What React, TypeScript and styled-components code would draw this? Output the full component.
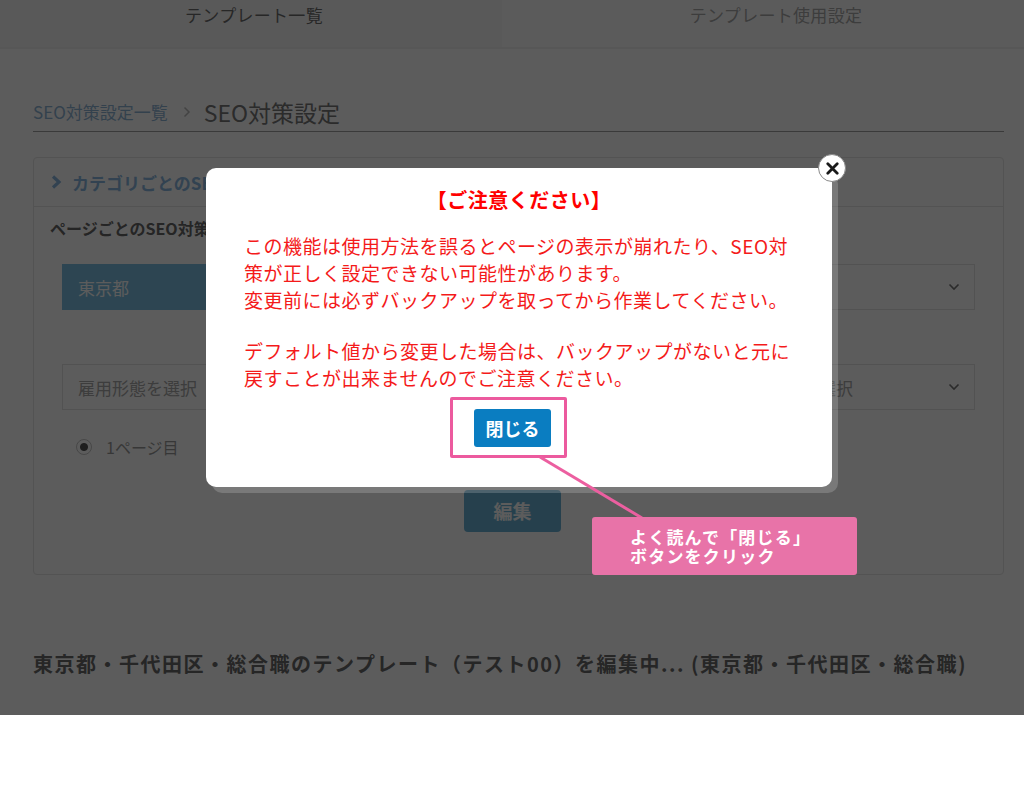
import React from "react"
import styled, { createGlobalStyle } from "styled-components"

const GlobalStyle = createGlobalStyle`
  html, body {
    margin: 0;
    padding: 0;
    background: #fff;
  }
  body {
    font-family: "Noto Sans CJK JP", "Noto Sans", sans-serif;
  }
  * {
    box-sizing: border-box;
  }
`

const App: React.FC = () => {
    return (
        <>
            <GlobalStyle />
            <Page>
                <TabBar>
                    <Tab $bg="#f7f7f7" $color="#6e6e6e" $shift={6}>テンプレート一覧</Tab>
                    <Tab $bg="#fdfdfd" $color="#a8a8a8" $shift={26}>テンプレート使用設定</Tab>
                </TabBar>

                <Content>
                    <Breadcrumb>
                        <CrumbLink>SEO対策設定一覧</CrumbLink>
                        <CrumbSep width="8" height="12" viewBox="0 0 8 12">
                            <polyline points="1.5,1.5 6,6 1.5,10.5" fill="none" stroke="#bbb" strokeWidth="1.5" />
                        </CrumbSep>
                        <CrumbCurrent>SEO対策設定</CrumbCurrent>
                    </Breadcrumb>

                    <Panel>
                        <PanelHeader>
                            <svg width="11" height="14" viewBox="0 0 11 14">
                                <polyline points="2,1.5 8,7 2,12.5" fill="none" stroke="#8cb8e0" strokeWidth="3.2" strokeLinejoin="miter" />
                            </svg>
                            カテゴリごとのSEO対策設定
                        </PanelHeader>
                        <PanelBody>
                            <SectionTitle>ページごとのSEO対策設定</SectionTitle>
                            <SelectRow $top={24}>
                                <Cell $active>東京都</Cell>
                                <Cell>千代田区<Chevron /></Cell>
                                <Cell>総合職<Chevron /></Cell>
                            </SelectRow>
                            <SelectRow $top={54}>
                                <Cell>雇用形態を選択<Chevron /></Cell>
                                <Cell>職種を選択<Chevron /></Cell>
                                <Cell>こだわり条件を選択<Chevron /></Cell>
                            </SelectRow>
                            <RadioRow>
                                <RadioCircle />
                                1ページ目
                            </RadioRow>
                            <ButtonRow>
                                <EditButton>編集</EditButton>
                            </ButtonRow>
                        </PanelBody>
                    </Panel>

                    <EditingTitle>東京都・千代田区・総合職のテンプレート（テスト00）を編集中... (東京都・千代田区・総合職)</EditingTitle>
                </Content>

                <Overlay>
                    <Modal>
                        <CloseButton>
                            <svg width="13" height="13" viewBox="0 0 13 13">
                                <path d="M1.8 1.8 L11.2 11.2 M11.2 1.8 L1.8 11.2" stroke="#1a1a1a" strokeWidth="2.8" strokeLinecap="round" />
                            </svg>
                        </CloseButton>
                        <ModalTitle>【ご注意ください】</ModalTitle>
                        <Notice>
                            この機能は使用方法を誤るとページの表示が崩れたり、SEO対<br />
                            策が正しく設定できない可能性があります。<br />
                            変更前には必ずバックアップを取ってから作業してください。
                        </Notice>
                        <Notice>
                            デフォルト値から変更した場合は、バックアップがないと元に<br />
                            戻すことが出来ませんのでご注意ください。
                        </Notice>
                        <ModalActions>
                            <Highlight />
                            <CloseAction>閉じる</CloseAction>
                        </ModalActions>
                    </Modal>

                    <Pointer width="108" height="66" viewBox="0 0 108 66">
                        <line x1="2" y1="2" x2="104" y2="63" stroke="#ec5fa0" strokeWidth="3" />
                    </Pointer>
                    <Callout>
                        よく読んで「閉じる」<br />
                        ボタンをクリック
                    </Callout>
                </Overlay>
            </Page>
        </>
    )
}

const Chevron = () => (
    <svg width="12" height="8" viewBox="0 0 12 8">
        <polyline points="1.5,1.5 6,6 10.5,1.5" fill="none" stroke="#777" strokeWidth="1.6" />
    </svg>
)

export default App

const Page = styled.div`
    position: relative;
    width: 1024px;
`

const TabBar = styled.div`
    display: flex;
    height: 49px;
    border-bottom: 2px solid #f2f2f2;
`

const Tab = styled.div<{ $bg: string; $color: string; $shift?: number }>`
    flex: 1;
    background: ${props => props.$bg};
    color: ${props => props.$color};
    font-size: 17px;
    line-height: 24px;
    letter-spacing: 0.3px;
    padding-top: 3px;
    padding-left: ${props => props.$shift || 0}px;
    text-align: center;
`

const Content = styled.div`
    padding: 0 20px 36px 33px;
`

const Breadcrumb = styled.div`
    display: flex;
    align-items: center;
    height: 35px;
    margin-top: 48px;
    padding-bottom: 4px;
    border-bottom: 1px solid #a0a0a0;
`

const CrumbLink = styled.span`
    font-size: 17px;
    line-height: 30px;
    color: #8fb5d6;
`

const CrumbSep = styled.svg`
    margin: 0 13px 0 15px;
`

const CrumbCurrent = styled.span`
    font-size: 23px;
    line-height: 30px;
    color: #777;
`

const Panel = styled.div`
    margin-top: 25px;
    border: 1px solid #e5e5e5;
    border-radius: 4px;
`

const PanelHeader = styled.div`
    display: flex;
    align-items: center;
    gap: 10px;
    height: 49px;
    padding-left: 17px;
    border-bottom: 1px solid #e5e5e5;
    color: #8cb8e0;
    font-size: 17px;
    font-weight: bold;
`

const PanelBody = styled.div`
    padding: 9px 28px 42px 16px;
`

const SectionTitle = styled.div`
    font-size: 16px;
    line-height: 24px;
    font-weight: bold;
    color: #666;
`

const SelectRow = styled.div<{ $top: number }>`
    display: grid;
    grid-template-columns: repeat(3, 1fr);
    gap: 20px;
    margin: ${props => props.$top}px 0 0 12px;
`

const Cell = styled.div<{ $active?: boolean }>`
    display: flex;
    align-items: center;
    justify-content: space-between;
    height: 46px;
    padding: 0 14px 0 15px;
    font-size: 17px;
    border: 1px solid ${props => props.$active ? "#7dbfe3" : "#e2e2e2"};
    background: ${props => props.$active ? "#7dbfe3" : "#fff"};
    color: ${props => props.$active ? "#fff" : "#a8a8a8"};
`

const RadioRow = styled.div`
    display: flex;
    align-items: center;
    gap: 14px;
    height: 20px;
    margin: 27px 0 0 26px;
    font-size: 16px;
    color: #9a9a9a;
`

const RadioCircle = styled.span`
    width: 16px;
    height: 16px;
    border-radius: 50%;
    border: 1px solid #c4c4c4;
    background: radial-gradient(circle, #555 0 3.5px, #fff 4.5px);
`

const ButtonRow = styled.div`
    display: flex;
    justify-content: center;
    margin-top: 33px;
`

const EditButton = styled.div`
    width: 97px;
    height: 42px;
    border-radius: 4px;
    background: #6ab2d6;
    color: #fff;
    font-size: 19px;
    font-weight: bold;
    line-height: 42px;
    text-align: center;
`

const EditingTitle = styled.h2`
    margin: 74px 0 0;
    font-size: 20px;
    line-height: 30px;
    font-weight: bold;
    letter-spacing: 1.5px;
    color: #6a6a6a;
`

const Overlay = styled.div`
    position: absolute;
    inset: 0;
    background: rgba(0, 0, 0, 0.64);
`

const Modal = styled.div`
    position: absolute;
    left: 206px;
    top: 168px;
    width: 626px;
    padding: 18px 38px 40px;
    background: #fff;
    border-radius: 10px;
    box-shadow: 6px 6px 0 rgba(255, 255, 255, 0.18);
`

const CloseButton = styled.div`
    position: absolute;
    top: -14px;
    right: -14px;
    width: 28px;
    height: 28px;
    border-radius: 50%;
    border: 1px solid #8a8a8a;
    background: #fff;
    display: flex;
    align-items: center;
    justify-content: center;
`

const ModalTitle = styled.div`
    margin-bottom: 19px;
    text-align: center;
    font-size: 20px;
    line-height: 27px;
    font-weight: bold;
    letter-spacing: 0.5px;
    color: #f00;
`

const Notice = styled.p`
    margin: 0 0 24px;
    font-size: 19px;
    line-height: 27px;
    letter-spacing: 0.5px;
    color: #f41a1a;

    &:last-of-type {
        margin-bottom: 18px;
    }
`

const ModalActions = styled.div`
    position: relative;
    display: flex;
    padding-left: 230px;
`

const CloseAction = styled.div`
    width: 77px;
    height: 38px;
    border-radius: 3px;
    background: #0a7dc1;
    color: #fff;
    font-size: 18px;
    font-weight: bold;
    line-height: 38px;
    text-align: center;
`

const Highlight = styled.div`
    position: absolute;
    left: 206px;
    top: -12px;
    width: 117px;
    height: 61px;
    border: 3px solid #ec5a9e;
    border-radius: 2px;
`

const Pointer = styled.svg`
    position: absolute;
    left: 538px;
    top: 455px;
`

const Callout = styled.div`
    position: absolute;
    left: 592px;
    top: 517px;
    width: 265px;
    height: 58px;
    padding: 10px 0 0 38px;
    border-radius: 3px;
    background: #e873a8;
    color: #fff;
    font-size: 17px;
    line-height: 19px;
    font-weight: bold;
    letter-spacing: 1.2px;
`
